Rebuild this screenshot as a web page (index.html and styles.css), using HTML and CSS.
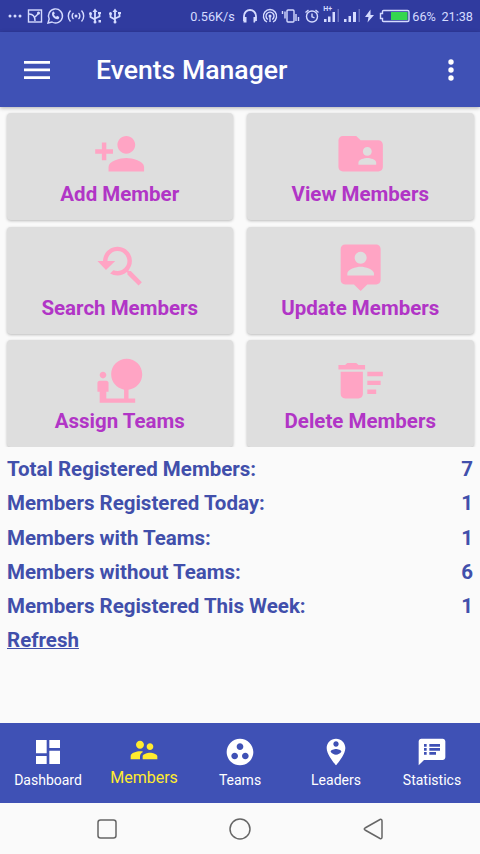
FILE: index.html
```html
<!DOCTYPE html>
<html lang="en">
<head>
    <meta charset="UTF-8">
    <meta name="viewport" content="width=device-width, initial-scale=1.0">
    <title>Events Manager</title>
    <link rel="stylesheet" href="styles.css">
</head>
<body>
    <div class="status-bar">
        <div class="status-left">
            <svg class="dots" width="14" height="16" viewBox="0 0 14 16"><circle cx="2" cy="8" r="1.5"/><circle cx="7" cy="8" r="1.5"/><circle cx="12" cy="8" r="1.5"/></svg>
            <svg class="line" width="16" height="16" viewBox="0 0 16 16"><rect x="1.5" y="2" width="13" height="12"/><path d="M2 6c5 0 6 3 6 7M8 9l4-4"/><circle cx="11.5" cy="5" r=".8"/></svg>
            <svg class="line" width="18" height="18" viewBox="0 0 18 18"><path d="M2 16l1.2-4A7 7 0 1 1 6 15z"/><path d="M6.500 5c-2 3.500 2.500 8.500 6.200 7l.6-2-2.300-1.200-1 1.200-2.200-2.200 1-1.200-.9-2z" class="fill"/></svg>
            <svg class="line" width="18" height="16" viewBox="0 0 18 16"><circle cx="9" cy="8" r="1.500" class="fill"/><path d="M6.500 5a4 4 0 0 0 0 6M11.500 5a4 4 0 0 1 0 6M3.500 2.500a8 8 0 0 0 0 11M14.500 2.500a8 8 0 0 1 0 11"/></svg>
            <svg class="line thick usb" width="14" height="16" viewBox="0 0 14 16"><path d="M7 2v12M2.500 6v3L7 11.500M11.500 5v3.500L7 10.500"/><path d="M4.500 4L7 .5 9.500 4z" class="fill"/><circle cx="2.500" cy="5.500" r="1.500" class="fill"/><circle cx="7" cy="14" r="1.500" class="fill"/><path d="M10 4h3v2h-3zM10.500 12H13v2.500h-2.500z" class="fill"/></svg>
            <svg class="line thick usb" width="14" height="16" viewBox="0 0 14 16"><path d="M7 2v12M2.500 6v3L7 11.500M11.500 5v3.500L7 10.500"/><path d="M4.500 4L7 .5 9.500 4z" class="fill"/><circle cx="2.500" cy="5.500" r="1.500" class="fill"/><circle cx="7" cy="14" r="1.500" class="fill"/><path d="M10 4h3v2h-3z" class="fill"/></svg>
        </div>
        <div class="status-right">
            <span class="speed">0.56K/s</span>
            <svg class="line thick" width="16" height="16" viewBox="0 0 16 16"><path d="M2 13V8a6 6 0 0 1 12 0v5"/><path d="M1.500 9h3v5.500h-3zM11.500 9h3L13 14.500h-1.500z" class="fill"/></svg>
            <svg class="line" width="16" height="16" viewBox="0 0 16 16"><path d="M5 14a6.600 6.600 0 1 1 6 0M5.800 11.500a4 4 0 1 1 4.400 0"/><circle cx="8" cy="8" r="1.500" class="fill"/><path d="M8 8v6"/></svg>
            <svg class="line" width="19" height="16" viewBox="0 0 19 16"><rect x="6" y="2" width="7" height="12" rx="1"/><path d="M4 3.500v7M1.500 3v3M15 6v7M17.500 9v4"/></svg>
            <svg class="line" width="16" height="16" viewBox="0 0 16 16"><circle cx="8" cy="8.500" r="5.500"/><path d="M8 5.500v3.300l2.500 1M1.500 4.500L4.500 2M14.500 4.500l-3-2.500"/></svg>
            <div class="mobile">
                <span class="network">H+</span>
                <svg width="17" height="16" viewBox="0 0 17 16"><path d="M1 11h2.500v3H1zM5 8.500h2.500V14H5zM9.500 4H12v10H9.500z"/><path class="dim" d="M14.500 1H16v13h-1.500z"/></svg>
            </div>
            <svg width="17" height="16" viewBox="0 0 17 16"><path d="M0 11h2.500v3H0zM4.500 8H7v6H4.500zM9 4h3v10H9z"/><path class="dim" d="M14.500 1H16v13h-1.500z"/></svg>
            <svg width="11" height="16" viewBox="0 0 11 16"><path d="M6.500 1.500L1 9h3.500L3.500 14.500 10 7H6.500z"/></svg>
            <svg class="line" width="31" height="14" viewBox="0 0 31 14"><path d="M3.500 4.500V2.500Q3.500 1.500 4.500 1.500h24Q30 1.500 30 3v8q0 1.500-1.500 1.500h-24q-1 0-1-1V9.500H1.500v-5z"/><path class="charge" d="M12 3h16.500v8H12z"/></svg>
            <span class="percent">66%</span>
            <span class="clock">21:38</span>
        </div>
    </div>

    <header class="toolbar">
        <svg class="menu-icon" viewBox="0 0 26 18"><path d="M0 0h26v2.700H0zM0 7.600h26v2.700H0zM0 15.200h26v2.700H0z"/></svg>
        <h1>Events Manager</h1>
        <svg class="more-icon" viewBox="0 0 6 22"><circle cx="3" cy="3" r="2.700"/><circle cx="3" cy="11" r="2.700"/><circle cx="3" cy="19" r="2.700"/></svg>
    </header>

    <main>
        <div class="cards">
            <div class="card">
                <svg viewBox="0 0 24 24"><path d="M15 12c2.210 0 4-1.790 4-4s-1.790-4-4-4-4 1.790-4 4 1.790 4 4 4zm-9-2V7H4v3H1v2h3v3h2v-3h3v-2H6zm9 4c-2.670 0-8 1.340-8 4v2h16v-2c0-2.660-5.330-4-8-4z"/></svg>
                <span>Add Member</span>
            </div>
            <div class="card">
                <svg viewBox="0 0 24 24"><path d="M20 6h-8l-2-2H4c-1.100 0-1.990.9-1.990 2L2 18c0 1.100.9 2 2 2h16c1.100 0 2-.9 2-2V8c0-1.100-.9-2-2-2zm-5 3c1.100 0 2 .9 2 2s-.9 2-2 2-2-.9-2-2 .9-2 2-2zm4 8h-8v-1c0-1.330 2.670-2 4-2s4 .67 4 2v1z"/></svg>
                <span>View Members</span>
            </div>
            <div class="card">
                <svg viewBox="0 0 24 24"><path d="M17.010 14h-.8l-.27-.27c.98-1.140 1.570-2.610 1.570-4.230 0-3.590-2.910-6.500-6.500-6.500s-6.500 3-6.500 6.500H2l3.840 4 4.160-4H6.510C6.510 7 8.530 5 11.010 5s4.500 2.010 4.500 4.500c0 2.480-2.020 4.500-4.500 4.500-.65 0-1.260-.14-1.820-.38L7.710 15.100c.97.57 2.090.9 3.300.9 1.610 0 3.080-.59 4.220-1.570l.27.27v.79l5.010 4.990L22 19l-4.990-5z"/></svg>
                <span>Search Members</span>
            </div>
            <div class="card">
                <svg viewBox="0 0 24 24"><path d="M19 2H5c-1.110 0-2 .9-2 2v14c0 1.100.89 2 2 2h4l3 3 3-3h4c1.100 0 2-.9 2-2V4c0-1.100-.9-2-2-2zm-7 3.300c1.490 0 2.700 1.210 2.700 2.700 0 1.490-1.210 2.700-2.700 2.700-1.490 0-2.700-1.210-2.700-2.700 0-1.490 1.210-2.700 2.700-2.700zM18 16H6v-.9c0-2 4-3.100 6-3.100s6 1.100 6 3.100v.9z"/></svg>
                <span>Update Members</span>
            </div>
            <div class="card">
                <svg viewBox="0 0 24 24"><path d="M22.170 9.170c0-3.870-3.130-7-7-7s-7 3.130-7 7c0 3.470 2.520 6.340 5.830 6.890V20H6v-3h1v-4c0-.55-.45-1-1-1H3c-.55 0-1 .45-1 1v4h1v5h16v-2h-3v-3.880c3.470-.41 6.170-3.360 6.170-6.950zM4.500 11c.83 0 1.500-.67 1.500-1.500S5.330 8 4.500 8 3 8.670 3 9.500 3.670 11 4.500 11z"/></svg>
                <span>Assign Teams</span>
            </div>
            <div class="card">
                <svg viewBox="0 0 24 24"><path d="M15 16h4v2h-4zm0-8h7v2h-7zm0 4h6v2h-6zM3 18c0 1.100.9 2 2 2h6c1.100 0 2-.9 2-2V8H3v10zM14 5h-3l-1-1H6L5 5H2v2h12z"/></svg>
                <span>Delete Members</span>
            </div>
        </div>

        <div class="stats">
            <div class="stat"><span>Total Registered Members:</span><span>7</span></div>
            <div class="stat"><span>Members Registered Today:</span><span>1</span></div>
            <div class="stat"><span>Members with Teams:</span><span>1</span></div>
            <div class="stat"><span>Members without Teams:</span><span>6</span></div>
            <div class="stat"><span>Members Registered This Week:</span><span>1</span></div>
            <div class="stat"><a href="#" class="refresh">Refresh</a></div>
        </div>
    </main>

    <nav class="bottom-nav">
        <div class="nav-item">
            <svg viewBox="0 0 24 24"><path d="M3 13h8V3H3v10zm0 8h8v-6H3v6zm10 0h8V11h-8v10zm0-18v6h8V3h-8z"/></svg>
            <span>Dashboard</span>
        </div>
        <div class="nav-item active">
            <svg viewBox="0 0 24 24"><path d="M16.500 12c1.380 0 2.490-1.120 2.490-2.500S17.880 7 16.500 7C15.120 7 14 8.120 14 9.500s1.120 2.500 2.500 2.500zM9 11c1.660 0 2.990-1.340 2.990-3S10.660 5 9 5C7.340 5 6 6.340 6 8s1.340 3 3 3zm7.500 3c-1.830 0-5.500.92-5.500 2.750V19h11v-2.250c0-1.830-3.670-2.750-5.500-2.750zM9 13c-2.330 0-7 1.170-7 3.500V19h7v-2.250c0-.85.33-2.340 2.370-3.470C10.500 13.100 9.660 13 9 13z"/></svg>
            <span>Members</span>
        </div>
        <div class="nav-item">
            <svg viewBox="0 0 24 24"><path d="M12 2C6.480 2 2 6.480 2 12s4.480 10 10 10 10-4.480 10-10S17.520 2 12 2zM8 17.500c-1.380 0-2.500-1.120-2.500-2.500s1.120-2.500 2.500-2.500 2.500 1.120 2.500 2.500-1.120 2.500-2.500 2.500zM9.500 8c0-1.380 1.120-2.500 2.500-2.500s2.500 1.120 2.500 2.500-1.120 2.500-2.500 2.500S9.500 9.380 9.500 8zm6.500 9.500c-1.380 0-2.500-1.120-2.500-2.500s1.120-2.500 2.500-2.500 2.500 1.120 2.500 2.500-1.120 2.500-2.500 2.500z"/></svg>
            <span>Teams</span>
        </div>
        <div class="nav-item">
            <svg viewBox="0 0 24 24"><path d="M12 2C8.140 2 5 5.140 5 9c0 5.250 7 13 7 13s7-7.750 7-13c0-3.860-3.140-7-7-7zm0 2c1.100 0 2 .9 2 2 0 1.110-.9 2-2 2s-2-.89-2-2c0-1.100.9-2 2-2zm0 10c-1.670 0-3.140-.85-4-2.150.02-1.320 2.670-2.050 4-2.050s3.980.73 4 2.050c-.86 1.300-2.330 2.150-4 2.150z"/></svg>
            <span>Leaders</span>
        </div>
        <div class="nav-item">
            <svg viewBox="0 0 24 24"><path d="M20 2H4c-1.100 0-1.990.9-1.990 2L2 22l4-4h14c1.100 0 2-.9 2-2V4c0-1.100-.9-2-2-2zM8 14H6v-2h2v2zm0-3H6V9h2v2zm0-3H6V6h2v2zm7 6h-5v-2h5v2zm3-3h-8V9h8v2zm0-3h-8V6h8v2z"/></svg>
            <span>Statistics</span>
        </div>
    </nav>

    <div class="system-nav">
        <svg viewBox="0 0 24 24"><rect x="3" y="3" width="18" height="18" rx="2.500"/></svg>
        <svg viewBox="0 0 24 24"><circle cx="12" cy="12" r="10"/></svg>
        <svg viewBox="0 0 24 24"><path d="M19 2.500Q21 1.800 21 4v16q0 2.200-2 1.500L4 13q-1.500-1 0-2z"/></svg>
    </div>
</body>
</html>
```
FILE: styles.css
```css
* {
    box-sizing: border-box;
    margin: 0;
    padding: 0;
}

body {
    display: flex;
    flex-direction: column;
    height: 854px;
    background-color: #fafafa;
    font-family: Roboto, "Liberation Sans", sans-serif;
    overflow: hidden;
}

svg {
    display: block;
    flex: none;
    fill: currentColor;
}

/* Status bar */
.status-bar {
    display: flex;
    justify-content: space-between;
    align-items: center;
    height: 32px;
    padding: 0 7px 0 8px;
    background-color: #303b9f;
    color: #d5dbff;
    font-size: 12.7px;
}

.status-left, .status-right {
    display: flex;
    align-items: center;
}

.status-left {
    gap: 3px;
}

.dots {
    margin-right: 2px;
}

.status-left .usb + .usb {
    margin-left: 3px;
}

.status-right {
    gap: 3.5px;
}

.speed {
    margin-right: 4px;
}

.percent {
    margin-left: -1px;
}

.clock {
    margin-left: 2px;
}

.line {
    fill: none;
    stroke: currentColor;
    stroke-width: 1.4;
}

.thick {
    stroke-width: 1.8;
}

.fill {
    fill: currentColor;
    stroke: none;
}

.dim {
    opacity: 0.35;
}

.charge {
    fill: #35d64f;
    stroke: none;
}

.mobile {
    position: relative;
}

.network {
    position: absolute;
    top: -3px;
    left: 0;
    font-size: 7px;
    font-weight: bold;
    line-height: 8px;
}

/* Toolbar */
.toolbar {
    display: flex;
    align-items: center;
    height: 75px;
    padding: 0 26px 0 24px;
    background-color: #3f51b5;
    color: #fff;
    box-shadow: 0 1px 4px rgba(0, 0, 0, 0.3);
    z-index: 1;
}

.toolbar h1 {
    flex: 1;
    font-size: 26.6px;
    font-weight: 500;
}

.menu-icon {
    width: 26px;
    height: 18px;
    margin-right: 46px;
}

.more-icon {
    width: 6px;
    height: 22px;
}

/* Cards */
main {
    flex: 1;
}

.cards {
    display: grid;
    grid-template-columns: 1fr 1fr;
    grid-auto-rows: 107px;
    gap: 6.5px 14px;
    height: 340px;
    padding: 6px 6.5px 0;
    overflow: hidden;
}

.card {
    display: flex;
    flex-direction: column;
    align-items: center;
    padding-top: 13.5px;
    background-color: #dedede;
    border-radius: 4px;
    box-shadow: 0 1px 3px rgba(0, 0, 0, 0.25);
    color: #ffa4c4;
}

.card svg {
    width: 53.3px;
    height: 53.3px;
}

.card span {
    margin-top: 1.7px;
    color: #b135c6;
    font-size: 20.5px;
    font-weight: bold;
    line-height: 26px;
}

/* Stats */
.stats {
    padding: 5px 7px;
}

.stat {
    display: flex;
    justify-content: space-between;
    height: 34.3px;
    color: #414fab;
    font-size: 20.5px;
    font-weight: bold;
    line-height: 34px;
}

.refresh {
    color: inherit;
    text-decoration-thickness: 1px;
}

/* Bottom navigation */
.bottom-nav {
    display: flex;
    height: 80px;
    background-color: #3f51b5;
    color: #fff;
}

.nav-item {
    display: flex;
    flex: 1;
    flex-direction: column;
    align-items: center;
    padding-top: 13px;
    font-size: 14px;
}

.nav-item svg {
    width: 32px;
    height: 32px;
}

.nav-item span {
    margin-top: 3px;
    line-height: 18px;
}

.nav-item.active {
    padding-top: 11px;
    color: #ffeb2e;
    font-size: 16px;
}

/* System buttons */
.system-nav {
    display: flex;
    justify-content: center;
    align-items: center;
    gap: 109px;
    height: 51px;
}

.system-nav svg {
    width: 24px;
    height: 24px;
    fill: none;
    stroke: #666;
    stroke-width: 1.5;
}
```
